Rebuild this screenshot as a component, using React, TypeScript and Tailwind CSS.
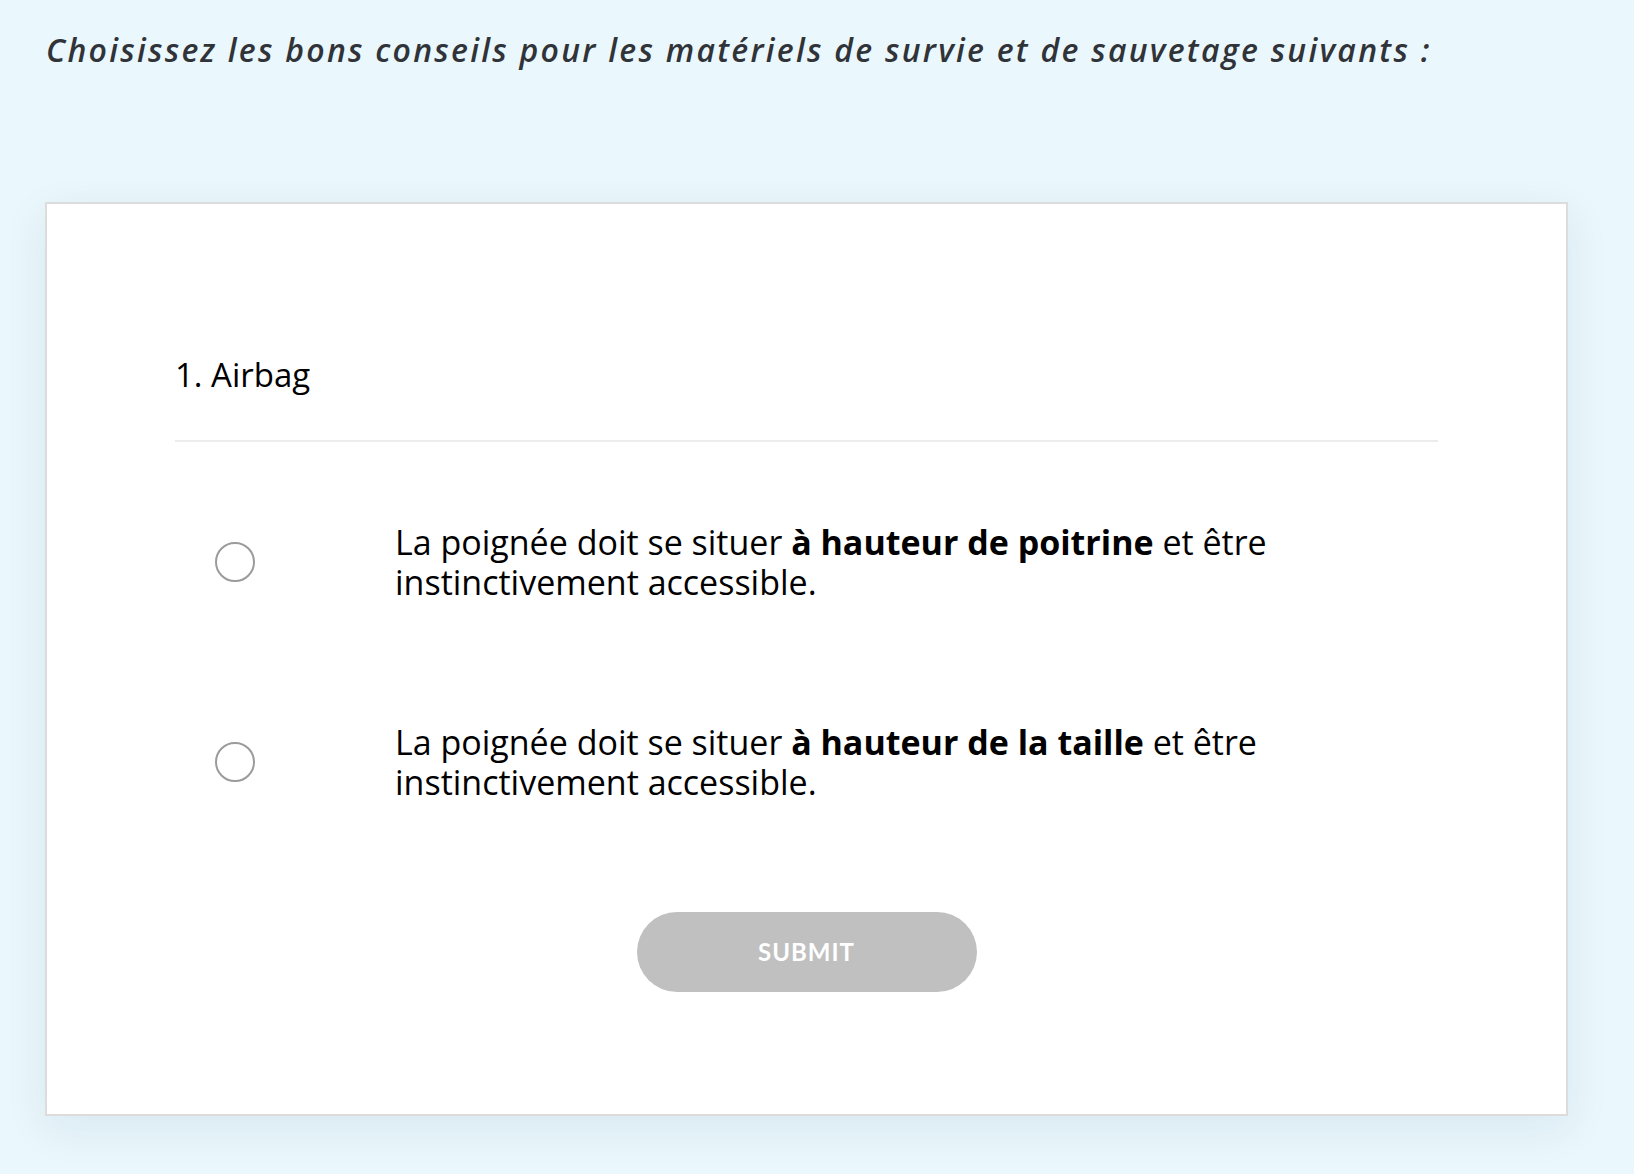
import { useState } from "react";

const options = [
  { id: "a", before: "La poignée doit se situer ", bold: "à hauteur de poitrine", after: " et être instinctivement accessible." },
  { id: "b", before: "La poignée doit se situer ", bold: "à hauteur de la taille", after: " et être instinctivement accessible." },
];

export default function App() {
  const [picked, setPicked] = useState<string | null>(null);

  return (
    <main className="min-h-screen bg-[#eaf7fc] pl-[45px] pt-[28px] pb-[60px] font-['Open_Sans',sans-serif]">
      <h2 className="pl-[1px] text-[32px] leading-[44px] font-semibold italic tracking-[2.25px] text-[#303338]">
        Choisissez les bons conseils pour les matériels de survie et de sauvetage suivants :
      </h2>

      <section className="mt-[130px] w-[1523px] border-2 border-[#dcdcdc] bg-white px-[128px] pt-[149px] pb-[122px] shadow-[0_12px_40px_rgba(40,90,120,0.09)]">
        <h3 className="text-[33px] leading-[44px] text-black">1. Airbag</h3>
        <div className="mt-[43px] h-[2px] bg-[#ececec]" />

        <div className="flex flex-col gap-[120px] pt-[80px]">
          {options.map((o) => (
            <label key={o.id} className="flex cursor-pointer items-center">
              <input
                type="radio"
                name="q1"
                className="sr-only"
                checked={picked === o.id}
                onChange={() => setPicked(o.id)}
              />
              <span className="ml-[40px] flex h-[40px] w-[40px] shrink-0 items-center justify-center rounded-full border-2 border-[#9b9b9b]">
                {picked === o.id && <span className="h-[20px] w-[20px] rounded-full bg-[#555]" />}
              </span>
              <span className="ml-[140px] text-[34px] leading-[40px] text-black">
                {o.before}
                <strong className="font-bold">{o.bold}</strong>
                {o.after}
              </span>
            </label>
          ))}
        </div>

        <div className="mt-[110px] flex justify-center">
          <button
            disabled={!picked}
            className="h-[80px] w-[340px] rounded-full bg-[#c0c0c0] font-['Lato',sans-serif] text-[24px] font-bold tracking-[1px] text-white"
          >
            SUBMIT
          </button>
        </div>
      </section>
    </main>
  );
}
